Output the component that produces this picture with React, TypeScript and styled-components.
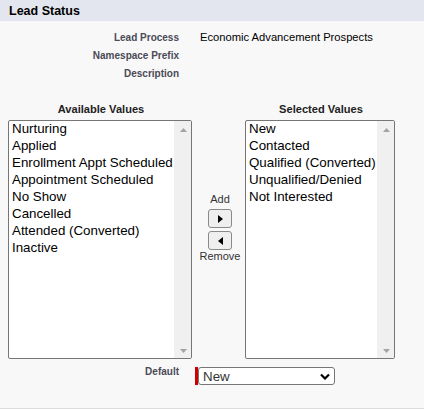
import React from 'react';
import styled, { createGlobalStyle } from 'styled-components';

const Global = createGlobalStyle`
  html, body { margin: 0; padding: 0; background: #ffffff; }
  body { font-family: Arial, "Liberation Sans", sans-serif; }
  * { box-sizing: border-box; }
`;

const Section = styled.div`
  width: 424px;
  height: 409px;
  background: #f8f8f8;
  border-bottom: 1px solid #dcdcdc;
  display: flex;
  flex-direction: column;
`;

const Header = styled.div`
  height: 21px;
  background: #e3e6ee;
  padding-left: 9px;
  display: flex;
  align-items: center;
  font-weight: bold;
  font-size: 12.5px;
  color: #000;
`;

const InfoGrid = styled.div`
  display: grid;
  grid-template-columns: 179px 1fr;
  column-gap: 21px;
  grid-auto-rows: 18px;
  padding-top: 7px;
  align-items: center;
`;

const Label = styled.div`
  text-align: right;
  font-weight: bold;
  font-size: 10px;
  color: #4a4a56;
  line-height: 13px;
`;

const Value = styled.div`
  font-size: 11.2px;
  color: #000;
  line-height: 13px;
`;

const Duel = styled.div`
  display: flex;
  align-items: flex-start;
  padding-left: 8px;
  margin-top: 20px;
`;

const Column = styled.div<{ $w: number }>`
  width: ${p => p.$w}px;
  display: flex;
  flex-direction: column;
`;

const Heading = styled.div`
  height: 14px;
  line-height: 14px;
  text-align: center;
  font-weight: bold;
  font-size: 11.1px;
  color: #222;
  margin-bottom: 4px;
  padding-left: 2px;
`;

const ListBox = styled.div`
  height: 239px;
  border: 1px solid #767676;
  border-radius: 2px;
  background: #fff;
  display: flex;
  overflow: hidden;
`;

const Items = styled.div`
  flex: 1;
  padding-left: 3px;
  margin-top: -1px;
  overflow: hidden;
`;

const Item = styled.div`
  height: 17px;
  line-height: 17px;
  font-size: 13.33px;
  color: #000;
  white-space: nowrap;
`;

const ScrollTrack = styled.div`
  width: 17px;
  background: #f0f0f0;
  display: flex;
  flex-direction: column;
  justify-content: space-between;
  align-items: center;
  padding: 7px 0 5px 1px;
`;

const Arrow = styled.svg`
  display: block;
`;

const Middle = styled.div`
  width: 53px;
  padding-top: 91px;
  padding-left: 3px;
  display: flex;
  flex-direction: column;
  align-items: center;
`;

const SmallText = styled.div<{ $mb?: number }>`
  font-size: 11px;
  line-height: 13px;
  color: #333;
  margin-bottom: ${p => p.$mb ?? 0}px;
`;

const MoveButton = styled.button<{ $mb?: number }>`
  width: 24px;
  height: 19px;
  padding: 0;
  border: 1px solid #8a8a8a;
  border-radius: 3px;
  background: #efefef;
  display: flex;
  align-items: center;
  justify-content: center;
  margin-bottom: ${p => p.$mb ?? 0}px;
`;

const DefaultRow = styled.div`
  display: grid;
  grid-template-columns: 179px auto;
  column-gap: 16px;
  margin-top: 6px;
  align-items: start;
`;

const Field = styled.div`
  display: flex;
  margin-top: 2px;
`;

const Required = styled.div`
  width: 3px;
  height: 18px;
  background: #c00;
`;

const SelectBox = styled.div`
  width: 137px;
  height: 18px;
  border: 1px solid #767676;
  border-radius: 3px;
  background: #fff;
  display: flex;
  align-items: center;
  justify-content: space-between;
  padding: 0 4px 0 4px;
  font-size: 13.33px;
  color: #333;
`;

const available = [
  'Nurturing',
  'Applied',
  'Enrollment Appt Scheduled',
  'Appointment Scheduled',
  'No Show',
  'Cancelled',
  'Attended (Converted)',
  'Inactive',
];

const selected = ['New', 'Contacted', 'Qualified (Converted)', 'Unqualified/Denied', 'Not Interested'];

const List = ({ items }: { items: string[] }) => (
  <ListBox>
    <Items>
      {items.map(i => (
        <Item key={i}>{i}</Item>
      ))}
    </Items>
    <ScrollTrack>
      <Arrow width="7" height="4" viewBox="0 0 7 4">
        <polygon points="0,4 7,4 3.5,0" fill="#a3a3a3" />
      </Arrow>
      <Arrow width="7" height="4" viewBox="0 0 7 4">
        <polygon points="0,0 7,0 3.5,4" fill="#a3a3a3" />
      </Arrow>
    </ScrollTrack>
  </ListBox>
);

export default function App() {
  return (
    <>
      <Global />
      <Section>
        <Header>Lead Status</Header>
        <InfoGrid>
          <Label>Lead Process</Label>
          <Value>Economic Advancement Prospects</Value>
          <Label>Namespace Prefix</Label>
          <Value></Value>
          <Label>Description</Label>
          <Value></Value>
        </InfoGrid>
        <Duel>
          <Column $w={184}>
            <Heading>Available Values</Heading>
            <List items={available} />
          </Column>
          <Middle>
            <SmallText $mb={3}>Add</SmallText>
            <MoveButton $mb={3} aria-label="Add">
              <svg width="5" height="8" viewBox="0 0 5 8">
                <polygon points="0,0 5,4 0,8" fill="#000" />
              </svg>
            </MoveButton>
            <MoveButton aria-label="Remove">
              <svg width="5" height="8" viewBox="0 0 5 8">
                <polygon points="5,0 0,4 5,8" fill="#000" />
              </svg>
            </MoveButton>
            <SmallText>Remove</SmallText>
          </Middle>
          <Column $w={150}>
            <Heading>Selected Values</Heading>
            <List items={selected} />
          </Column>
        </Duel>
        <DefaultRow>
          <Label>Default</Label>
          <Field>
            <Required />
            <SelectBox>
              <span>New</span>
              <svg width="10" height="7" viewBox="0 0 10 7">
                <polyline points="1,1.5 5,5.5 9,1.5" fill="none" stroke="#000" strokeWidth="2.2" />
              </svg>
            </SelectBox>
          </Field>
        </DefaultRow>
      </Section>
    </>
  );
}
